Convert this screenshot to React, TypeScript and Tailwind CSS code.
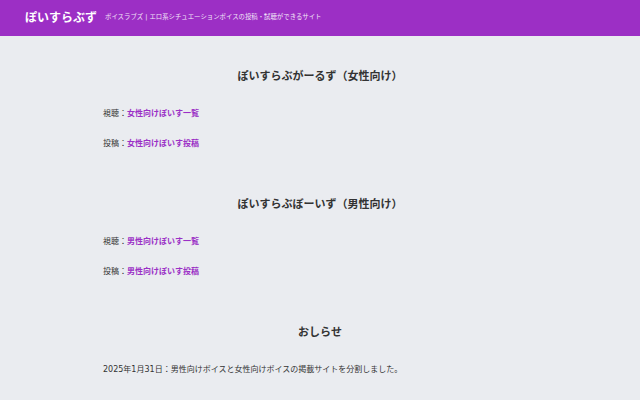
const font = "font-['DejaVu_Sans','Noto_Sans_CJK_JP',sans-serif]";

function Section({
  title,
  rows,
}: {
  title: string;
  rows: { label: string; link?: string; text?: string }[];
}) {
  return (
    <section className="mt-[45px] first:mt-[31px]">
      <h2 className="h-[20px] leading-[20px] text-center text-[11px] font-bold text-[#333]">{title}</h2>
      {rows.map((r, i) => (
        <p
          key={i}
          className={`h-[12px] leading-[12px] text-[8px] text-[#333] ${i === 0 ? "mt-[21px]" : "mt-[18px]"}`}
        >
          {r.label}
          {r.link && <a className="font-bold text-[#9b30c6]">{r.link}</a>}
          {r.text}
        </p>
      ))}
    </section>
  );
}

export default function App() {
  return (
    <div className={`${font} min-h-[400px] bg-[#eaecf0]`}>
      <header className="h-[36px] bg-[#9c2fc5] flex items-center px-[25px]">
        <h1 className="text-[12px] font-bold text-white">ぽいすらぶず</h1>
        <span className="ml-[8px] text-[6.4px] text-[#f1e4f7]">
          ボイスラブズ | エロ系シチュエーションボイスの投稿・試聴ができるサイト
        </span>
      </header>
      <main className="mx-auto w-[434px]">
        <Section
          title="ぽいすらぶがーるず（女性向け）"
          rows={[
            { label: "視聴：", link: "女性向けぽいす一覧" },
            { label: "投稿：", link: "女性向けぽいす投稿" },
          ]}
        />
        <Section
          title="ぽいすらぶぼーいず（男性向け）"
          rows={[
            { label: "視聴：", link: "男性向けぽいす一覧" },
            { label: "投稿：", link: "男性向けぽいす投稿" },
          ]}
        />
        <Section
          title="おしらせ"
          rows={[{ label: "2025年1月31日：男性向けボイスと女性向けボイスの掲載サイトを分割しました。" }]}
        />
      </main>
    </div>
  );
}
